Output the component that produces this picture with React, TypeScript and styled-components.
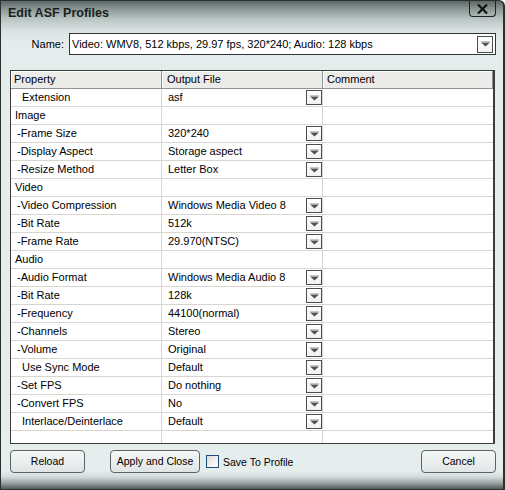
import React from "react";
import styled, { createGlobalStyle } from "styled-components";

const Global = createGlobalStyle`
  html, body { margin: 0; padding: 0; background: #ffffff; }
  * { box-sizing: border-box; }
  body { font-family: "Liberation Sans", Arial, sans-serif; }
`;

const Window = styled.div`
  width: 505px;
  height: 490px;
  border: 1px solid #2b3130;
  border-right-width: 2px;
  border-top-right-radius: 6px;
  display: flex;
  flex-direction: column;
  background: linear-gradient(
    to bottom,
    #5d6766 0px,
    #8a9795 8px,
    #b9c5c3 18px,
    #dae3e2 30px,
    #e5edec 42px,
    #e6eeed 470px,
    #d3dbda 476px,
    #9aa4a3 482px,
    #5e6665 487px,
    #3f4645 490px
  );
  overflow: hidden;
`;

const TitleBar = styled.div`
  height: 32px;
  display: flex;
  justify-content: space-between;
  align-items: flex-start;
  padding-left: 7px;
  padding-right: 7px;
`;

const Title = styled.div`
  font-family: "Liberation Sans", Arial, sans-serif;
  font-weight: bold;
  font-size: 12.5px;
  color: #1c1f1f;
  padding-top: 5px;
  line-height: 14px;
`;

const CloseButton = styled.div`
  width: 27px;
  height: 17px;
  margin-top: -1px;
  border: 1px solid #1e2222;
  border-top: none;
  border-radius: 0 0 4px 4px;
  display: flex;
  align-items: center;
  justify-content: center;
  padding-top: 1px;
`;

const NameRow = styled.div`
  height: 22px;
  display: flex;
  align-items: center;
  gap: 5px;
`;

const NameLabel = styled.label`
  width: 63px;
  text-align: right;
  font-size: 11px;
  color: #000;
`;

const NameSelect = styled.div`
  width: 427px;
  height: 22px;
  border: 1px solid #2f3535;
  background: #ffffff;
  display: flex;
  align-items: center;
  padding-left: 2px;
  padding-right: 2px;
  font-size: 11px;
  color: #000;
`;

const SelectText = styled.span`
  flex: 1;
  white-space: nowrap;
  overflow: hidden;
`;

const DropBox = styled.div<{ $w: number; $h: number }>`
  width: ${(p) => p.$w}px;
  height: ${(p) => p.$h}px;
  flex: none;
  border: 1px solid #4a4e4e;
  background: linear-gradient(#ffffff, #f1f1f1);
  display: flex;
  align-items: center;
  justify-content: center;
`;

const Table = styled.div`
  margin-top: 15px;
  margin-left: 9px;
  width: 485px;
  height: 374px;
  border: 1px solid #3a3d3d;
  border-right-width: 2px;
  background: #ffffff;
  display: flex;
  flex-direction: column;
`;

const Row = styled.div<{ $last?: boolean }>`
  display: grid;
  grid-template-columns: 151px 161px 1fr;
  height: 18px;
  flex: none;
  border-bottom: 1px solid #d9d6cf;
`;

const Filler = styled.div`
  display: grid;
  grid-template-columns: 151px 161px 1fr;
  flex: 1;
`;

const HeadRow = styled.div`
  display: grid;
  grid-template-columns: 151px 161px 1fr;
  height: 18px;
  flex: none;
`;

const HeadCell = styled.div<{ $pad: number }>`
  background: #ebebea;
  border-right: 1px solid #8f9292;
  border-bottom: 1px solid #8f9292;
  box-shadow: inset 1px 1px 0 #ffffff;
  font-size: 11px;
  line-height: 17px;
  padding-left: ${(p) => p.$pad}px;
  color: #000;
  white-space: nowrap;
`;

const Cell = styled.div<{ $pad?: number }>`
  border-right: 1px solid #d9d6cf;
  font-size: 11px;
  line-height: 17px;
  padding-left: ${(p) => p.$pad ?? 0}px;
  color: #000;
  white-space: nowrap;
  display: flex;
  align-items: center;
`;

const ValueCell = styled(Cell)`
  padding-left: 6px;
  padding-right: 0;
  justify-content: space-between;
`;

const LastCell = styled.div``;

const ButtonRow = styled.div`
  margin-top: 6px;
  height: 23px;
  display: flex;
  align-items: center;
  padding-left: 9px;
  padding-right: 7px;
`;

const Button = styled.button<{ $w: number; $ml?: number }>`
  width: ${(p) => p.$w}px;
  height: 23px;
  margin-left: ${(p) => p.$ml ?? 0}px;
  border: 1px solid #5b6363;
  border-radius: 4px;
  background: linear-gradient(#f5f7f7, #e9eded 60%, #dfe4e4);
  font-family: "Liberation Sans", Arial, sans-serif;
  font-size: 10.5px;
  color: #000;
  padding: 0;
  padding-bottom: 1px;
`;

const CancelButton = styled(Button)`
  margin-left: auto;
`;

const CheckLabel = styled.label`
  display: flex;
  align-items: center;
  gap: 4px;
  margin-left: 6px;
  font-size: 10.5px;
  color: #000;
`;

const CheckBox = styled.span`
  width: 13px;
  height: 13px;
  border: 1px solid #1e4f7c;
  background: linear-gradient(135deg, #dcdcdc, #f6f6f6 70%, #ffffff);
`;

const Tri = () => (
  <svg width="9" height="6" viewBox="0 0 9 6">
    <rect x="0" y="0" width="9" height="1" fill="#c8c8c8" />
    <polygon points="0,1.5 9,1.5 4.5,5.5" fill="#505353" />
  </svg>
);

type R = { p: string; v?: string; pad: number };

const rows: R[] = [
  { p: "Extension", v: "asf", pad: 11 },
  { p: "Image", pad: 4 },
  { p: "-Frame Size", v: "320*240", pad: 6 },
  { p: "-Display Aspect", v: "Storage aspect", pad: 6 },
  { p: "-Resize Method", v: "Letter Box", pad: 6 },
  { p: "Video", pad: 4 },
  { p: "-Video Compression", v: "Windows Media Video 8", pad: 6 },
  { p: "-Bit Rate", v: "512k", pad: 6 },
  { p: "-Frame Rate", v: "29.970(NTSC)", pad: 6 },
  { p: "Audio", pad: 4 },
  { p: "-Audio Format", v: "Windows Media Audio 8", pad: 6 },
  { p: "-Bit Rate", v: "128k", pad: 6 },
  { p: "-Frequency", v: "44100(normal)", pad: 6 },
  { p: "-Channels", v: "Stereo", pad: 6 },
  { p: "-Volume", v: "Original", pad: 6 },
  { p: "Use Sync Mode", v: "Default", pad: 11 },
  { p: "-Set FPS", v: "Do nothing", pad: 6 },
  { p: "-Convert FPS", v: "No", pad: 6 },
  { p: "Interlace/Deinterlace", v: "Default", pad: 11 },
];

export default function App() {
  return (
    <>
      <Global />
      <Window>
        <TitleBar>
          <Title>Edit ASF Profiles</Title>
          <CloseButton>
            <svg width="11" height="10" viewBox="0 0 11 10">
              <path d="M1 0.5 L10 9.5 M10 0.5 L1 9.5" stroke="#111" strokeWidth="2.2" />
            </svg>
          </CloseButton>
        </TitleBar>
        <NameRow>
          <NameLabel>Name:</NameLabel>
          <NameSelect>
            <SelectText>Video: WMV8, 512 kbps, 29.97 fps, 320*240; Audio: 128 kbps</SelectText>
            <DropBox $w={16} $h={17}>
              <Tri />
            </DropBox>
          </NameSelect>
        </NameRow>
        <Table>
          <HeadRow>
            <HeadCell $pad={3}>Property</HeadCell>
            <HeadCell $pad={5}>Output File</HeadCell>
            <HeadCell $pad={4}>Comment</HeadCell>
          </HeadRow>
          {rows.map((r, i) => (
            <Row key={i}>
              <Cell $pad={r.pad}>{r.p}</Cell>
              <ValueCell>
                <span>{r.v ?? ""}</span>
                {r.v !== undefined && (
                  <DropBox $w={16} $h={15}>
                    <Tri />
                  </DropBox>
                )}
              </ValueCell>
              <LastCell />
            </Row>
          ))}
          <Filler>
            <Cell />
            <Cell />
            <LastCell />
          </Filler>
        </Table>
        <ButtonRow>
          <Button $w={75}>Reload</Button>
          <Button $w={90} $ml={25}>Apply and Close</Button>
          <CheckLabel>
            <CheckBox />
            Save To Profile
          </CheckLabel>
          <CancelButton $w={75}>Cancel</CancelButton>
        </ButtonRow>
      </Window>
    </>
  );
}
